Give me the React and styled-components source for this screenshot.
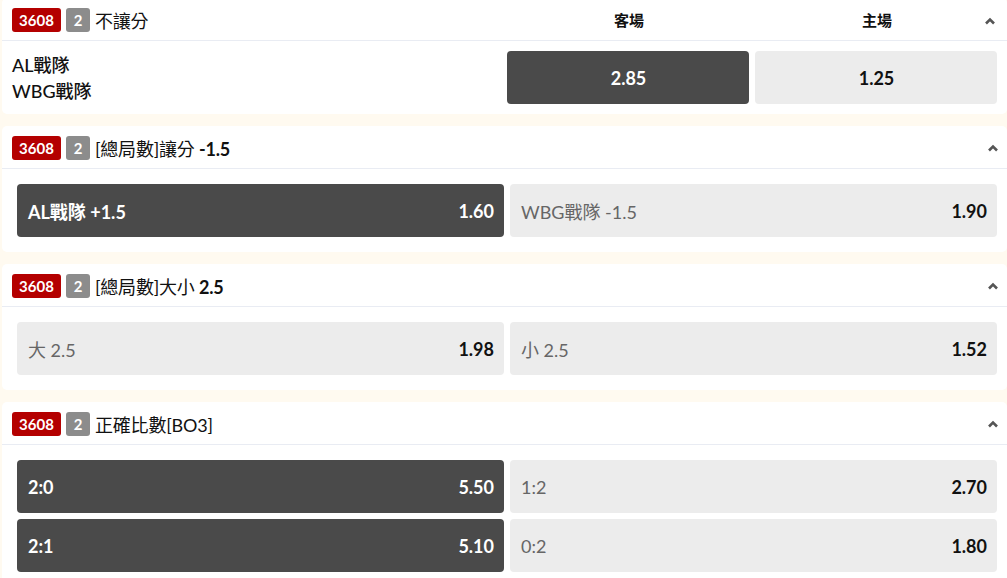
import React from "react";
import styled, { createGlobalStyle } from "styled-components";

const GlobalStyle = createGlobalStyle`
  html, body {
    margin: 0;
    padding: 0;
    background: #fffaf0;
    overflow: hidden;
  }
  body {
    font-family: Lato, "Noto Sans CJK TC", sans-serif;
    color: #111;
  }
`;

const Page = styled.div`
  display: flex;
  flex-direction: column;
  gap: 12px;
  margin-top: -2px;
  padding-left: 2px;
`;

const Card = styled.section`
  background: #fff;
  border-radius: 5px;
`;

const Header = styled.div`
  position: relative;
  display: flex;
  align-items: center;
  height: 41px;
  padding: 1px 9px 0 10px;
  border-bottom: 1px solid #e9ecf3;
`;

const TitleGroup = styled.div`
  display: flex;
  align-items: center;
  gap: 5px;
  flex: 1;
`;

const Badge = styled.span`
  display: inline-flex;
  align-items: center;
  justify-content: center;
  height: 24px;
  width: ${(p) => (p.$wide ? "49px" : "24px")};
  box-sizing: border-box;
  border-radius: 3px;
  background: ${(p) => p.$bg};
  color: #fff;
  font-weight: 700;
  font-size: 15px;
`;

const Title = styled.span`
  font-size: 18px;
  color: #111;
  letter-spacing: -0.2px;

  b {
    font-weight: 700;
  }
`;

const ColumnLabel = styled.span`
  width: 242px;
  text-align: center;
  font-weight: 700;
  font-size: 15px;
  margin-left: 6px;
`;

const Chevron = styled.svg`
  width: 10px;
  height: 8px;
  flex-shrink: 0;
  ${(p) =>
    p.$over ? `position: absolute; right: 12px; top: 19px;` : ``}
`;

const MatchBody = styled.div`
  display: grid;
  grid-template-columns: 1fr 242px 242px;
  column-gap: 6px;
  align-items: center;
  padding: 10px 10px 10px 10px;
`;

const Teams = styled.div`
  display: flex;
  flex-direction: column;
  font-size: 18px;
  line-height: 26px;
  font-weight: 500;
  color: #111;
`;

const OddsGrid = styled.div`
  display: grid;
  grid-template-columns: 1fr 1fr;
  gap: 6px;
  padding: 15px 10px 15px 15px;
`;

const OddButton = styled.button`
  display: flex;
  align-items: center;
  justify-content: ${(p) => (p.$center ? "center" : "space-between")};
  height: 53px;
  padding: 0 10px 0 11px;
  border: none;
  border-radius: 4px;
  background: ${(p) => (p.$active ? "#4a4a4a" : "#ececec")};
  color: ${(p) => (p.$active ? "#fff" : "#111")};
  font-family: inherit;
  font-size: 18px;
  cursor: pointer;
`;

const Label = styled.span`
  font-weight: ${(p) => (p.$active ? 700 : 400)};
  color: ${(p) => (p.$active ? "#fff" : "#666")};
`;

const Price = styled.span`
  font-weight: 700;
`;

const Caret = ({ over }) => (
  <Chevron $over={over} viewBox="0 0 10 8">
    <path d="M1 6.5 L5 2.5 L9 6.5" fill="none" stroke="#555" strokeWidth="2.6" />
  </Chevron>
);

const MarketHeader = ({ children, extra, over }) => (
  <Header>
    <TitleGroup>
      <Badge $bg="#b40000" $wide>3608</Badge>
      <Badge $bg="#8c8c8c">2</Badge>
      <Title>{children}</Title>
    </TitleGroup>
    {extra}
    <Caret over={over} />
  </Header>
);

const markets = [
  {
    title: (
      <>
        [總局數]讓分 <b>-1.5</b>
      </>
    ),
    rows: [[["AL戰隊 +1.5", "1.60", true], ["WBG戰隊 -1.5", "1.90", false]]],
  },
  {
    title: (
      <>
        [總局數]大小 <b>2.5</b>
      </>
    ),
    rows: [[["大 2.5", "1.98", false], ["小 2.5", "1.52", false]]],
  },
  {
    title: "正確比數[BO3]",
    rows: [
      [["2:0", "5.50", true], ["1:2", "2.70", false]],
      [["2:1", "5.10", true], ["0:2", "1.80", false]],
    ],
  },
];

export default function App() {
  return (
    <>
      <GlobalStyle />
      <Page>
        <Card>
          <MarketHeader
            over
            extra={
              <>
                <ColumnLabel>客場</ColumnLabel>
                <ColumnLabel>主場</ColumnLabel>
              </>
            }
          >
            不讓分
          </MarketHeader>
          <MatchBody>
            <Teams>
              <span>AL戰隊</span>
              <span>WBG戰隊</span>
            </Teams>
            <OddButton $active $center>
              <Price>2.85</Price>
            </OddButton>
            <OddButton $center>
              <Price>1.25</Price>
            </OddButton>
          </MatchBody>
        </Card>

        {markets.map((m, i) => (
          <Card key={i}>
            <MarketHeader>{m.title}</MarketHeader>
            <OddsGrid>
              {m.rows.flat().map(([label, price, active]) => (
                <OddButton key={label} $active={active}>
                  <Label $active={active}>{label}</Label>
                  <Price>{price}</Price>
                </OddButton>
              ))}
            </OddsGrid>
          </Card>
        ))}
      </Page>
    </>
  );
}
